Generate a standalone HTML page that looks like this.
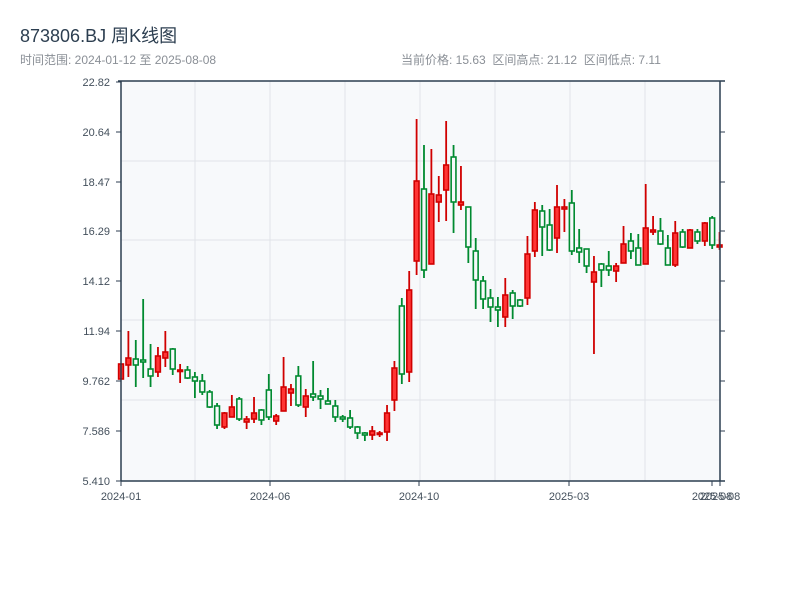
<!DOCTYPE html>
<html><head><meta charset="utf-8"><style>
body{margin:0;background:#fff;width:800px;height:600px;overflow:hidden;font-family:"Liberation Sans","Noto Sans CJK SC",sans-serif}
.t{position:absolute;left:20px;top:22px;font-size:18px;color:#2c3e50}
.s{position:absolute;top:51px;font-size:12px;color:#8a8f96;white-space:pre}
</style></head><body>
<div class="t">873806.BJ 周K线图</div>
<div class="s" style="left:20px">时间范围: 2024-01-12 至 2025-08-08</div>
<div class="s" style="left:401px">当前价格: 15.63  区间高点: 21.12  区间低点: 7.11</div>
<svg id="c" width="800" height="600" style="position:absolute;left:0;top:0" xmlns="http://www.w3.org/2000/svg">
<rect x="121" y="81" width="599" height="400" fill="#f7f9fb"/>
<g stroke="#e1e4e8" stroke-width="1">
<line x1="195" y1="81" x2="195" y2="481"/><line x1="270" y1="81" x2="270" y2="481"/><line x1="345" y1="81" x2="345" y2="481"/><line x1="420" y1="81" x2="420" y2="481"/><line x1="495" y1="81" x2="495" y2="481"/><line x1="570" y1="81" x2="570" y2="481"/><line x1="645" y1="81" x2="645" y2="481"/>
<line x1="121" y1="161" x2="720" y2="161"/><line x1="121" y1="240" x2="720" y2="240"/><line x1="121" y1="320" x2="720" y2="320"/><line x1="121" y1="400" x2="720" y2="400"/>
</g>
<g id="k"></g>
<g stroke="#2c3e50" stroke-width="1.5" fill="none">
<line x1="118" y1="81" x2="725" y2="81"/>
<line x1="121" y1="81" x2="121" y2="481"/>
<line x1="720" y1="81" x2="720" y2="481"/>
<line x1="121" y1="481" x2="725" y2="481"/>
</g>
<g stroke="#2c3e50" stroke-width="1">
<line x1="116" y1="82" x2="121" y2="82"/><line x1="116" y1="132" x2="121" y2="132"/><line x1="116" y1="182" x2="121" y2="182"/><line x1="116" y1="231" x2="121" y2="231"/><line x1="116" y1="281" x2="121" y2="281"/><line x1="116" y1="331" x2="121" y2="331"/><line x1="116" y1="381" x2="121" y2="381"/><line x1="116" y1="431" x2="121" y2="431"/><line x1="116" y1="481" x2="121" y2="481"/>
<line x1="720" y1="132" x2="725" y2="132"/><line x1="720" y1="182" x2="725" y2="182"/><line x1="720" y1="231" x2="725" y2="231"/><line x1="720" y1="281" x2="725" y2="281"/><line x1="720" y1="331" x2="725" y2="331"/><line x1="720" y1="381" x2="725" y2="381"/><line x1="720" y1="431" x2="725" y2="431"/>
<line x1="121" y1="481" x2="121" y2="486"/><line x1="270" y1="481" x2="270" y2="486"/><line x1="419" y1="481" x2="419" y2="486"/><line x1="569" y1="481" x2="569" y2="486"/><line x1="712" y1="481" x2="712" y2="486"/><line x1="720" y1="481" x2="720" y2="486"/>
</g>
<g font-size="11" fill="#44505c" text-anchor="end" font-family="Liberation Sans,sans-serif">
<text x="110" y="86">22.82</text><text x="110" y="136">20.64</text><text x="110" y="186">18.47</text><text x="110" y="235">16.29</text><text x="110" y="285">14.12</text><text x="110" y="335">11.94</text><text x="110" y="385">9.762</text><text x="110" y="435">7.586</text><text x="110" y="485">5.410</text>
</g>
<g font-size="11" fill="#44505c" text-anchor="middle" font-family="Liberation Sans,sans-serif">
<text x="121" y="500">2024-01</text><text x="270" y="500">2024-06</text><text x="419" y="500">2024-10</text><text x="569" y="500">2025-03</text><text x="712" y="500">2025-08</text><text x="720" y="500">2025-08</text>
</g>
</svg>
<script>
var d=[
["r",364,379,364,379],["r",358,365,331,377],["g",359,365,340,387],["g",360,362,299,378],["g",369,376,344,387],["r",356,372,347,377],["r",352,358,331,367],["g",349,369,348,375],["r",370,371,364,383],["g",370,378,366,379],
["g",377,381,372,398],["g",381,392,374,395],["g",392,407,390,408],["g",406,425,403,429],["r",413,427,412,429],["r",407,417,395,417],["g",399,419,397,421],["r",419,422,416,429],["r",413,419,397,423],["g",410,420,409,425],
["g",390,417,374,420],["r",416,421,414,425],["r",387,411,357,411],["r",389,393,384,406],["g",376,405,366,407],["r",396,407,389,417],["g",394,397,361,401],["g",396,399,390,409],["g",401,404,388,404],["g",406,417,400,422],
["g",417,419,415,422],["g",418,427,410,429],["g",427,433,426,439],["g",433,435,432,441],["r",431,435,426,440],["r",433,434,431,437],["r",413,432,405,441],["r",368,400,361,411],["g",306,374,298,384],["r",290,372,271,382],
["r",181,261,119,275],["g",189,270,145,278],["r",194,264,149,264],["r",195,202,176,222],["r",165,190,121,221],["g",157,202,145,233],["r",202,205,166,210],["g",207,247,207,263],["g",251,280,238,309],["g",281,299,276,309],
["g",298,307,289,322],["g",307,310,297,327],["r",295,317,278,327],["g",293,306,290,319],["g",300,306,299,307],["r",254,298,236,305],["r",210,251,202,257],["g",211,227,205,256],["g",225,250,209,251],["r",207,238,185,253],
["r",207,209,199,232],["g",203,251,190,255],["g",248,252,229,263],["g",249,266,249,273],["r",272,282,256,354],["g",264,270,263,287],["g",266,270,251,276],["r",266,271,263,282],["r",244,263,226,263],["g",241,251,233,259],
["g",248,265,234,265],["r",228,264,184,264],["r",230,232,216,235],["g",231,244,218,245],["g",248,265,235,265],["r",233,265,221,267],["g",232,247,229,248],["r",230,248,229,248],["g",232,241,229,244],["r",223,241,222,246],
["g",218,245,216,249],["r",245,247,232,250]];
var s="";
d.forEach(function(c,i){var x=121+i*7.39;var r=c[0]=="r";var col=r?"#d00000":"#008a30";
s+='<line x1="'+x+'" y1="'+c[3]+'" x2="'+x+'" y2="'+c[4]+'" stroke="'+col+'" stroke-width="1.8"/>';
var h=Math.max(c[2]-c[1],1.5);
s+='<rect x="'+(x-2.4)+'" y="'+c[1]+'" width="4.8" height="'+h+'" fill="'+(r?"#ff3535":"#f7f9fb")+'" stroke="'+col+'" stroke-width="1.6"/>';});
document.getElementById("k").innerHTML=s;
</script>
</body></html>
